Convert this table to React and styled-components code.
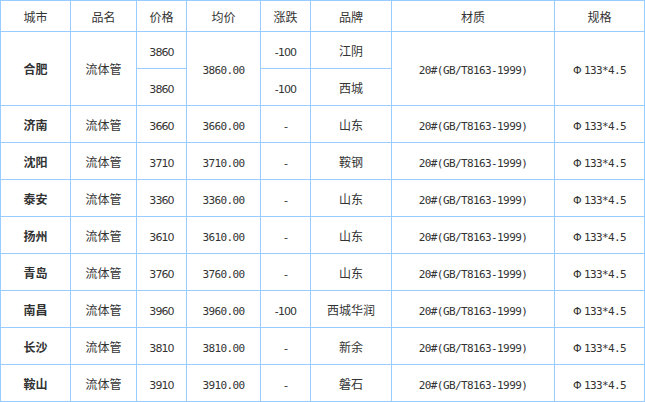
import styled, { createGlobalStyle } from "styled-components";

const Global = createGlobalStyle`
    body {
        margin: 0;
        background: #fff;
        font-family: "Noto Sans CJK SC", sans-serif;
    }
`
const Table = styled.table`
    width: 645px;
    border-collapse: collapse;
    table-layout: fixed;
    color: #333;
    font-size: 12px;
`
const HeadCell = styled.th`
    height: 30px;
    padding: 0;
    border: 1px solid #99ccff;
    font-weight: normal;
    text-align: center;
`
const Cell = styled.td`
    height: 36px;
    padding: 0;
    border: 1px solid #99ccff;
    text-align: center;
    font-weight: ${(p) => (p.$bold ? "bold" : "normal")};
`
const Sans = styled.span`
    font-family: "DejaVu Sans", sans-serif;
    font-size: 11px;
    letter-spacing: -0.9px;
`
const Mono = styled.span`
    font-family: "DejaVu Sans Mono", monospace;
    font-size: 11px;
    letter-spacing: -0.6px;
    color: #333;
`
const Phi = styled.span`
    display: inline-block;
    width: 11px;
    font-family: "DejaVu Sans", sans-serif;
    font-size: 11px;
    text-align: left;
`

const widths = [70, 66, 50, 74, 50, 81, 163, 90];
const heads = ["城市", "品名", "价格", "均价", "涨跌", "品牌", "材质", "规格"];
const material = "20#(GB/T8163-1999)";

const Spec = () => (
    <>
        <Phi>Φ</Phi>
        <Mono>133*4.5</Mono>
    </>
);

const rows = [
    ["济南", "3660", "山东"],
    ["沈阳", "3710", "鞍钢"],
    ["泰安", "3360", "山东"],
    ["扬州", "3610", "山东"],
    ["青岛", "3760", "山东"],
    ["南昌", "3960", "西城华润", "-100"],
    ["长沙", "3810", "新余"],
    ["鞍山", "3910", "磐石"],
];

export default function App() {
    return (
        <>
            <Global />
            <Table>
                <colgroup>
                    {widths.map((w, i) => <col key={i} style={{ width: w }} />)}
                </colgroup>
                <thead>
                    <tr>
                        {heads.map((h) => <HeadCell key={h}>{h}</HeadCell>)}
                    </tr>
                </thead>
                <tbody>
                    <tr>
                        <Cell rowSpan={2} $bold>合肥</Cell>
                        <Cell rowSpan={2}>流体管</Cell>
                        <Cell><Sans>3860</Sans></Cell>
                        <Cell rowSpan={2}><Mono>3860.00</Mono></Cell>
                        <Cell><Sans>-100</Sans></Cell>
                        <Cell>江阴</Cell>
                        <Cell rowSpan={2}><Mono>{material}</Mono></Cell>
                        <Cell rowSpan={2}><Spec /></Cell>
                    </tr>
                    <tr>
                        <Cell><Sans>3860</Sans></Cell>
                        <Cell><Sans>-100</Sans></Cell>
                        <Cell>西城</Cell>
                    </tr>
                    {rows.map(([city, price, brand, change]) => (
                        <tr key={city}>
                            <Cell $bold>{city}</Cell>
                            <Cell>流体管</Cell>
                            <Cell><Sans>{price}</Sans></Cell>
                            <Cell><Mono>{price}.00</Mono></Cell>
                            <Cell><Sans>{change || "-"}</Sans></Cell>
                            <Cell>{brand}</Cell>
                            <Cell><Mono>{material}</Mono></Cell>
                            <Cell><Spec /></Cell>
                        </tr>
                    ))}
                </tbody>
            </Table>
        </>
    );
}
